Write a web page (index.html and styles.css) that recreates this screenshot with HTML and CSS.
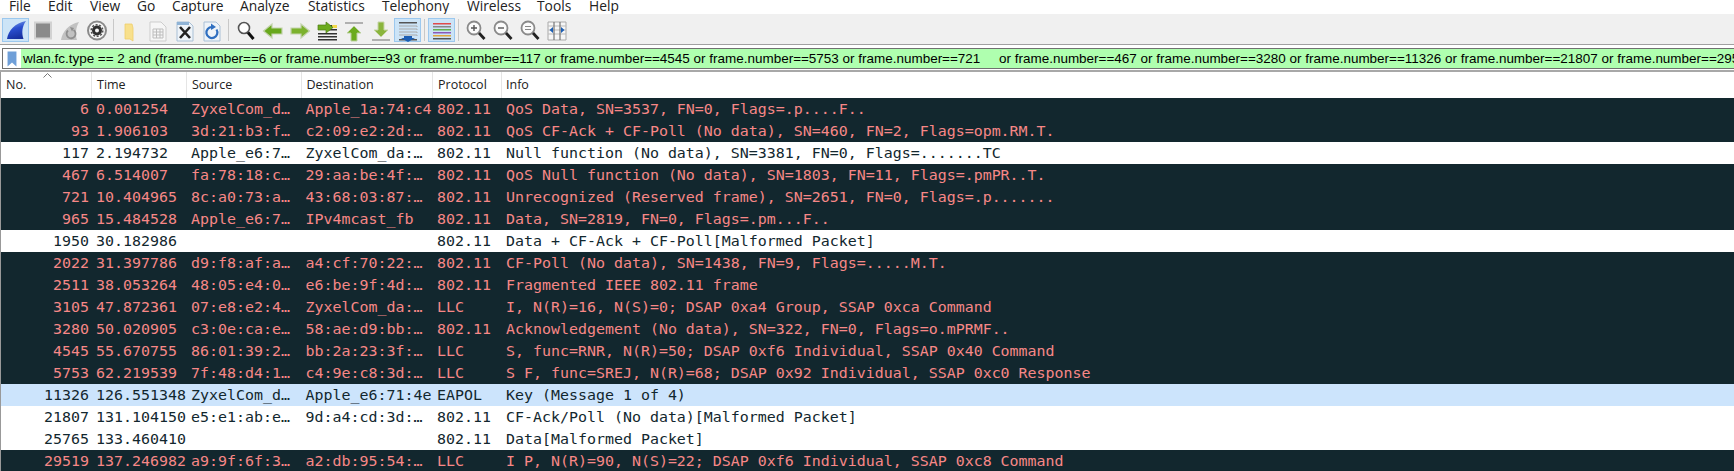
FILE: index.html
```html
<!DOCTYPE html>
<html lang="en">
<head>
<meta charset="utf-8">
<title>Wireshark</title>
<link rel="stylesheet" href="styles.css">
</head>
<body>
<nav class="menubar">
  <span class="menu m-file">File</span><span class="menu m-edit">Edit</span><span class="menu m-view">View</span><span class="menu m-go">Go</span><span class="menu m-capture">Capture</span><span class="menu m-analyze">Analyze</span><span class="menu m-stats">Statistics</span><span class="menu m-tel">Telephony</span><span class="menu m-wire">Wireless</span><span class="menu m-tools">Tools</span><span class="menu">Help</span>
</nav>
<div class="toolbar">
  <button class="tool active"><svg viewBox="0 0 24 24"><defs><linearGradient id="fin" x1="0.2" y1="0" x2="0.5" y2="1"><stop offset="0" stop-color="#7fa4e6"/><stop offset="0.45" stop-color="#2a4fd0"/><stop offset="1" stop-color="#17309f"/></linearGradient></defs><path d="M3 21C4.500 12 11 5 22 3C18 8.500 17.500 15 19.500 21Z" fill="url(#fin)"/></svg></button>
  <button class="tool"><svg viewBox="0 0 24 24"><rect x="4" y="4.500" width="16" height="16" fill="#8a8a8a" stroke="#d2d2d2" stroke-width="2"/></svg></button>
  <button class="tool"><svg viewBox="0 0 24 24"><path d="M3 22C4.500 13 11 6 21 4C18 9 17 16 19 22Z" fill="#c2c2c2"/><path d="M15.500 12A4.500 4.500 0 1 1 10 12.500" fill="none" stroke="#8f8f8f" stroke-width="1.800"/><path d="M12 9l4 1-2 3.500z" fill="#8f8f8f"/></svg></button>
  <button class="tool"><svg viewBox="0 0 24 24"><circle cx="12" cy="12.500" r="9" fill="#f6f6f6" stroke="#8a8a8a" stroke-width="2"/><circle cx="12" cy="12.500" r="3.500" fill="none" stroke="#303030" stroke-width="3"/><circle cx="12" cy="12.500" r="5.800" fill="none" stroke="#505050" stroke-width="1.500" stroke-dasharray="2 1.600"/></svg></button>
  <i class="sep"></i>
  <button class="tool"><svg viewBox="0 0 24 24"><path d="M6 6h7l1 4v13l-3-2H6z" fill="#f8e08c" stroke="#efce6a" stroke-width="0.800"/></svg></button>
  <button class="tool"><svg viewBox="0 0 24 24"><path d="M4 4h11l5 5v14H4z" fill="#f6f6f6" stroke="#cdcdcd"/><path d="M7 11h10v9H7zM7 14h10M7 17h10M10.500 11v9M14 11v9" fill="none" stroke="#bdbdbd"/></svg></button>
  <button class="tool"><svg viewBox="0 0 24 24"><path d="M4 4h12l4 4v15H4z" fill="#eef3f8" stroke="#a9c0d6"/><path d="M4 4h12v3H4z" fill="#8fb3d6"/><path d="M7 9l10 11M17 9L7 20" stroke="#222" stroke-width="2.600"/></svg></button>
  <button class="tool"><svg viewBox="0 0 24 24"><path d="M4 4h12l4 4v15H4z" fill="#eef3f8" stroke="#a9c0d6"/><path d="M16.500 11.500A5.500 5.500 0 1 1 12 9" fill="none" stroke="#2f6fc0" stroke-width="2.200"/><path d="M11 5.500l5 3.500-5 3z" fill="#2f6fc0"/></svg></button>
  <i class="sep"></i>
  <button class="tool"><svg viewBox="0 0 24 24"><circle cx="10" cy="10" r="5.500" fill="#fff" stroke="#555" stroke-width="1.600"/><path d="M14 14.500l5.500 6.500" stroke="#111" stroke-width="3"/></svg></button>
  <button class="tool"><svg viewBox="0 0 24 24"><path d="M2.500 13L11 6v4h10v6H11v4z" fill="#68a81c" stroke="#c3d3ad" stroke-width="1.200"/></svg></button>
  <button class="tool"><svg viewBox="0 0 24 24"><path d="M21.500 13L13 6v4H3v6h10v4z" fill="#7cb22d" stroke="#c3d3ad" stroke-width="1.200"/></svg></button>
  <button class="tool"><svg viewBox="0 0 24 24"><path d="M9 7h13v2H9zM13 11h9v1.500h-9zM3 15h19v1.500H3zM3 18h19v1.500H3zM3 21h19v1.500H3z" fill="#333"/><path d="M17 7h5v3h-5z" fill="#f2d84a"/><path d="M18 9.500L11 4v3H3v5h8v3z" fill="#6cab1e" stroke="#4d7d14" stroke-width="0.700"/></svg></button>
  <button class="tool"><svg viewBox="0 0 24 24"><path d="M3 4h18v2H3z" fill="#b0b0b0"/><path d="M12 8l7 7h-4v8H9v-8H5z" fill="#6cab1e" stroke="#bcd19e"/></svg></button>
  <button class="tool"><svg viewBox="0 0 24 24"><path d="M3 21h18v2H3z" fill="#b0b0b0"/><path d="M12 19l7-7h-4V4H9v8H5z" fill="#8ab53d" stroke="#c7d6a9"/></svg></button>
  <button class="tool active"><svg viewBox="0 0 24 24"><path d="M3 4h18v1.500H3z" fill="#555"/><path d="M3 8h18v1M3 11h18v1M3 14h18v1M3 17h18v1" stroke="#aaa" fill="none"/><path d="M3 21h18v1.500H3z" fill="#555"/><path d="M8 18h8v2h3l-7 4-7-4h3z" fill="#1d5fb4"/></svg></button>
  <i class="sep"></i>
  <button class="tool active"><svg viewBox="0 0 24 24"><path d="M3 5h18v1.500H3z" fill="#e04b4b"/><path d="M3 8h18v1.500H3z" fill="#888"/><path d="M3 11h18v1.500H3z" fill="#63b04e"/><path d="M3 14h18v1.500H3z" fill="#8a5ab8"/><path d="M3 17h18v1.500H3z" fill="#e0a93c"/><path d="M3 20h18v1.500H3z" fill="#555"/></svg></button>
  <i class="sep"></i>
  <button class="tool"><svg viewBox="0 0 24 24"><circle cx="10" cy="10" r="6.500" fill="#fbfbfb" stroke="#8a8a8a" stroke-width="1.800"/><path d="M7 10h6M10 7v6" stroke="#555" stroke-width="1.400"/><path d="M15 15l5.500 6" stroke="#222" stroke-width="2.800"/></svg></button>
  <button class="tool"><svg viewBox="0 0 24 24"><circle cx="10" cy="10" r="6.500" fill="#fbfbfb" stroke="#8a8a8a" stroke-width="1.800"/><path d="M7 10h6" stroke="#555" stroke-width="1.400"/><path d="M15 15l5.500 6" stroke="#222" stroke-width="2.800"/></svg></button>
  <button class="tool"><svg viewBox="0 0 24 24"><circle cx="10" cy="10" r="6.500" fill="#fbfbfb" stroke="#8a8a8a" stroke-width="1.800"/><path d="M7 8.500h6M7 11.500h6" stroke="#888" stroke-width="1.200"/><path d="M15 15l5.500 6" stroke="#222" stroke-width="2.800"/></svg></button>
  <button class="tool"><svg viewBox="0 0 24 24"><path d="M3 4h18v18H3z" fill="#f6f6f6" stroke="#aaa"/><path d="M3 8h18M3 12h18M3 16h18" stroke="#bbb"/><path d="M9 4v18M15 4v18" stroke="#777" stroke-width="1.200"/><path d="M8 9L4.500 12 8 15zM16 9l3.500 3-3.500 3z" fill="#1d5fb4"/></svg></button>
</div>
<div class="filterbar">
  <div class="filter">
    <span class="bookmark"><svg viewBox="0 0 11 18"><path d="M0.500 0.500h10v17L5.500 13 0.500 17.500z" fill="#6f9fd8"/></svg></span>
    <span class="filter-text">wlan.fc.type == 2 and (frame.number==6 or frame.number==93 or frame.number==117 or frame.number==4545 or frame.number==5753 or frame.number==721     or frame.number==467 or frame.number==3280 or frame.number==11326 or frame.number==21807 or frame.number==29519 or frame.number==25765)</span>
  </div>
</div>
<div class="packets">
  <div class="row head">
    <span class="cell num-head">No.<svg class="sort" viewBox="0 0 9 5"><path d="M0.500 4.500L4.500 0.500 8.500 4.500" fill="none" stroke="#777"/></svg></span><span class="cell">Time</span><span class="cell">Source</span><span class="cell">Destination</span><span class="cell">Protocol</span><span class="cell">Info</span>
  </div>
  <div class="row bad"><span class="cell no">6</span><span class="cell">0.001254</span><span class="cell">ZyxelCom_d…</span><span class="cell">Apple_1a:74:c4</span><span class="cell">802.11</span><span class="cell">QoS Data, SN=3537, FN=0, Flags=.p....F..</span></div>
  <div class="row bad"><span class="cell no">93</span><span class="cell">1.906103</span><span class="cell">3d:21:b3:f…</span><span class="cell">c2:09:e2:2d:…</span><span class="cell">802.11</span><span class="cell">QoS CF-Ack + CF-Poll (No data), SN=460, FN=2, Flags=opm.RM.T.</span></div>
  <div class="row plain"><span class="cell no">117</span><span class="cell">2.194732</span><span class="cell">Apple_e6:7…</span><span class="cell">ZyxelCom_da:…</span><span class="cell">802.11</span><span class="cell">Null function (No data), SN=3381, FN=0, Flags=.......TC</span></div>
  <div class="row bad"><span class="cell no">467</span><span class="cell">6.514007</span><span class="cell">fa:78:18:c…</span><span class="cell">29:aa:be:4f:…</span><span class="cell">802.11</span><span class="cell">QoS Null function (No data), SN=1803, FN=11, Flags=.pmPR..T.</span></div>
  <div class="row bad"><span class="cell no">721</span><span class="cell">10.404965</span><span class="cell">8c:a0:73:a…</span><span class="cell">43:68:03:87:…</span><span class="cell">802.11</span><span class="cell">Unrecognized (Reserved frame), SN=2651, FN=0, Flags=.p.......</span></div>
  <div class="row bad"><span class="cell no">965</span><span class="cell">15.484528</span><span class="cell">Apple_e6:7…</span><span class="cell">IPv4mcast_fb</span><span class="cell">802.11</span><span class="cell">Data, SN=2819, FN=0, Flags=.pm...F..</span></div>
  <div class="row plain"><span class="cell no">1950</span><span class="cell">30.182986</span><span class="cell"></span><span class="cell"></span><span class="cell">802.11</span><span class="cell">Data + CF-Ack + CF-Poll[Malformed Packet]</span></div>
  <div class="row bad"><span class="cell no">2022</span><span class="cell">31.397786</span><span class="cell">d9:f8:af:a…</span><span class="cell">a4:cf:70:22:…</span><span class="cell">802.11</span><span class="cell">CF-Poll (No data), SN=1438, FN=9, Flags=.....M.T.</span></div>
  <div class="row bad"><span class="cell no">2511</span><span class="cell">38.053264</span><span class="cell">48:05:e4:0…</span><span class="cell">e6:be:9f:4d:…</span><span class="cell">802.11</span><span class="cell">Fragmented IEEE 802.11 frame</span></div>
  <div class="row bad"><span class="cell no">3105</span><span class="cell">47.872361</span><span class="cell">07:e8:e2:4…</span><span class="cell">ZyxelCom_da:…</span><span class="cell">LLC</span><span class="cell">I, N(R)=16, N(S)=0; DSAP 0xa4 Group, SSAP 0xca Command</span></div>
  <div class="row bad"><span class="cell no">3280</span><span class="cell">50.020905</span><span class="cell">c3:0e:ca:e…</span><span class="cell">58:ae:d9:bb:…</span><span class="cell">802.11</span><span class="cell">Acknowledgement (No data), SN=322, FN=0, Flags=o.mPRMF..</span></div>
  <div class="row bad"><span class="cell no">4545</span><span class="cell">55.670755</span><span class="cell">86:01:39:2…</span><span class="cell">bb:2a:23:3f:…</span><span class="cell">LLC</span><span class="cell">S, func=RNR, N(R)=50; DSAP 0xf6 Individual, SSAP 0x40 Command</span></div>
  <div class="row bad"><span class="cell no">5753</span><span class="cell">62.219539</span><span class="cell">7f:48:d4:1…</span><span class="cell">c4:9e:c8:3d:…</span><span class="cell">LLC</span><span class="cell">S F, func=SREJ, N(R)=68; DSAP 0x92 Individual, SSAP 0xc0 Response</span></div>
  <div class="row eapol"><span class="cell no">11326</span><span class="cell">126.551348</span><span class="cell">ZyxelCom_d…</span><span class="cell">Apple_e6:71:4e</span><span class="cell">EAPOL</span><span class="cell">Key (Message 1 of 4)</span></div>
  <div class="row plain"><span class="cell no">21807</span><span class="cell">131.104150</span><span class="cell">e5:e1:ab:e…</span><span class="cell">9d:a4:cd:3d:…</span><span class="cell">802.11</span><span class="cell">CF-Ack/Poll (No data)[Malformed Packet]</span></div>
  <div class="row plain"><span class="cell no">25765</span><span class="cell">133.460410</span><span class="cell"></span><span class="cell"></span><span class="cell">802.11</span><span class="cell">Data[Malformed Packet]</span></div>
  <div class="row bad"><span class="cell no">29519</span><span class="cell">137.246982</span><span class="cell">a9:9f:6f:3…</span><span class="cell">a2:db:95:54:…</span><span class="cell">LLC</span><span class="cell">I P, N(R)=90, N(S)=22; DSAP 0xf6 Individual, SSAP 0xc8 Command</span></div>
</div>
</body>
</html>
```
FILE: styles.css
```css
* { box-sizing: border-box; }
html, body { margin: 0; height: 100%; overflow: hidden; background: #fff; }
body { font-family: "Open Sans", "Noto Sans", sans-serif; color: #222; }

.menubar {
  display: flex;
  align-items: flex-end;
  height: 15px;
  padding-left: 9px;
  overflow: hidden;
  border-bottom: 1px solid #f0f0f0;
  font-size: 13.800px;
  line-height: 18px;
}
.menu { flex: none; margin-bottom: -1px; }
.m-file { width: 39px; }
.m-edit { width: 42px; }
.m-view { width: 47px; }
.m-go { width: 35px; }
.m-capture { width: 68px; }
.m-analyze { width: 68px; }
.m-stats { width: 74px; }
.m-tel { width: 85px; }
.m-wire { width: 70px; }
.m-tools { width: 52px; }

.toolbar {
  display: flex;
  align-items: center;
  height: 30px;
  padding-left: 2px;
  background: #f0f0f0;
  border-bottom: 1px solid #a0a0a0;
}
.tool {
  display: flex;
  align-items: center;
  justify-content: center;
  flex: none;
  width: 27px;
  height: 24px;
  padding: 0;
  border: 1px solid transparent;
  background: none;
}
.tool svg { display: block; width: 24px; height: 24px; flex: none; }
.tool.active { background: #cce4f7; border-color: #9cc8ee; }
.sep { flex: none; width: 7px; height: 22px; background: linear-gradient(#c8c8c8, #c8c8c8) center / 1px 100% no-repeat; }

.filterbar {
  height: 27px;
  padding: 3px 0 0 2px;
  border-bottom: 2px solid #a8a8a8;
}
.filter {
  display: flex;
  align-items: center;
  height: 21px;
  overflow: hidden;
  background: #afffaf;
  border: 1px solid #707070;
  border-right: 0;
}
.bookmark {
  display: flex;
  align-items: center;
  justify-content: center;
  flex: none;
  width: 18px;
  height: 100%;
  background: #fff;
}
.bookmark svg { width: 10px; height: 16px; }
.filter-text {
  flex: none;
  padding-left: 2px;
  font-family: "Liberation Sans", sans-serif;
  font-size: 13.470px;
  line-height: 19px;
  white-space: pre;
  color: #000;
}

.packets { border-left: 1px solid #999; }
.row {
  display: grid;
  grid-template-columns: 91px 95px 114.500px 131.500px 69px 1fr;
  height: 22px;
  font-family: "DejaVu Sans Mono", monospace;
  font-size: 14.950px;
  line-height: 22px;
  white-space: pre;
}
.cell { display: block; padding-left: 4px; overflow: hidden; }
.no { padding: 0 3px 0 0; text-align: right; }
.bad { background: #12272e; color: #f78787; }
.plain { background: #fff; color: #12272e; }
.eapol { background: #cce4fc; color: #12272e; }

.head {
  height: 26px;
  font-family: "Open Sans", "Noto Sans", sans-serif;
  font-size: 12.500px;
  line-height: 26px;
  color: #222;
}
.head .cell { position: relative; padding-left: 5px; border-right: 1px solid #e5e5e5; }
.head .cell:last-child { padding-left: 4px; border-right: 0; }
.head .num-head { padding-left: 5px; }
.sort { position: absolute; left: 42px; top: 1px; width: 9px; height: 5px; }
```
